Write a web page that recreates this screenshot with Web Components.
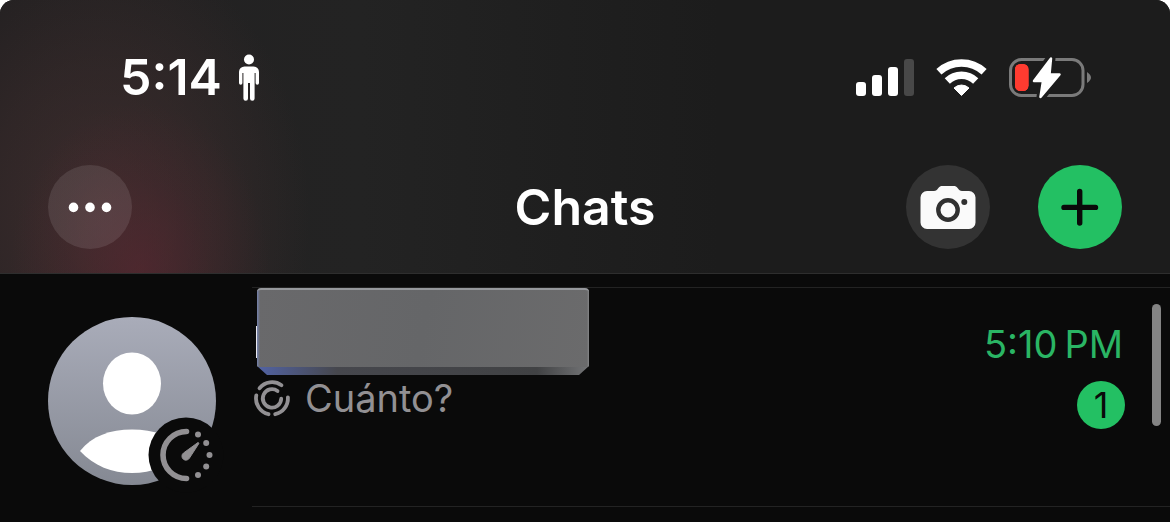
<!DOCTYPE html>
<html lang="es">
<head>
<meta charset="utf-8">
<meta name="viewport" content="width=device-width, initial-scale=1">
<title>Chats</title>
<style>
    body {
        margin: 0;
        background-color: #fff;
        font-family: Inter, "Liberation Sans", sans-serif;
        color: #fff;
    }
</style>
</head>
<body>
<chat-app>
    <status-bar slot="header">5:14</status-bar>
    <nav-bar slot="header">Chats</nav-bar>
    <chat-row time="5:10&#8239;PM" unread="1">Cuánto?</chat-row>
</chat-app>

<script>
const icons = {
    person: `<svg width="24" height="48" viewBox="0 0 24 48" fill="#fff">
        <circle cx="12" cy="6.500" r="5"/>
        <path d="M7.500 13.500h9a5.500 5.500 0 0 1 5.500 5.500V30a1.700 1.700 0 0 1-3.400 0V20h-1v25.500a2.200 2.200 0 0 1-4.600 0V30h-2v15.500a2.200 2.200 0 0 1-4.600 0V20H5.400V30A1.700 1.700 0 0 1 2 30V19A5.500 5.500 0 0 1 7.500 13.500z"/>
    </svg>`,
    signal: `<svg width="58" height="38" viewBox="0 0 58 38" fill="#fff">
        <rect x="0" y="24" width="10" height="14" rx="3"/>
        <rect x="16" y="17" width="10" height="21" rx="3"/>
        <rect x="32" y="9" width="10" height="29" rx="3"/>
        <rect x="48" y="1" width="10" height="37" rx="3" fill="#484848"/>
    </svg>`,
    wifi: `<svg width="51" height="40" viewBox="0 0 51 40" fill="none" stroke="#fff">
        <path stroke-width="7.500" d="M2.900 14.700A33.500 33.500 0 0 1 48.100 14.700"/>
        <path stroke-width="7.500" d="M11.300 24A20.500 20.500 0 0 1 39.700 24"/>
        <path fill="#fff" stroke-linejoin="round" d="M25.500 38.500L18 31A11 11 0 0 1 33 31z"/>
    </svg>`,
    battery: `<svg width="82" height="46" viewBox="0 0 82 46">
        <rect x="1.500" y="5.500" width="72.500" height="36" rx="11" fill="none" stroke="#7a7a7a" stroke-width="3"/>
        <path d="M78 18q8 5.500 0 11z" fill="#7a7a7a"/>
        <rect x="6" y="10" width="13.500" height="27" rx="5.500" fill="#ff3b30"/>
        <path d="M42 4L25 27H34L32 43L50.500 20H40.500z" fill="#1c1c1c" stroke="#1c1c1c" stroke-width="9" stroke-linejoin="round"/>
        <rect x="6" y="10" width="13.500" height="27" rx="5.500" fill="#ff3b30"/>
        <path d="M42 4.500L25 27H34L31.500 43L50.500 20.500H40.500z" fill="#fff" stroke="#fff" stroke-width="2.500" stroke-linejoin="round"/>
    </svg>`,
    more: `<svg width="44" height="12" viewBox="0 0 44 12" fill="#fff">
        <circle cx="5.500" cy="6.400" r="4.800"/><circle cx="22" cy="6.400" r="4.800"/><circle cx="38.500" cy="6.400" r="4.800"/>
    </svg>`,
    camera: `<svg width="56" height="44" viewBox="0 0 56 44">
        <path fill="#fafafa" d="M7 6H14c2 0 3-1 4-2.500C19.500 1.500 20.500 1 22.500 1H33.500c2 0 3 .5 4.500 2.500C39 5 40 6 42 6H49a6.500 6.500 0 0 1 6.500 6.500V37.500A6.500 6.500 0 0 1 49 44H7A6.500 6.500 0 0 1 .5 37.500V12.500A6.500 6.500 0 0 1 7 6z"/>
        <circle cx="28" cy="25" r="9.700" fill="none" stroke="#303030" stroke-width="4.400"/>
        <circle cx="44.300" cy="17" r="3" fill="#303030"/>
    </svg>`,
    plus: `<svg width="40" height="40" viewBox="0 0 40 40" stroke="#0a0a0a" stroke-width="5.400" stroke-linecap="round">
        <path d="M4 20.400H35.500M19.700 4.500V36"/>
    </svg>`,
    avatar: `<svg width="168" height="168" viewBox="0 0 168 168" overflow="visible">
        <defs>
            <linearGradient id="shade" x1="0" y1="0" x2="0" y2="1">
                <stop offset="0" stop-color="#a9acb9"/>
                <stop offset="1" stop-color="#858993"/>
            </linearGradient>
        </defs>
        <circle cx="84" cy="84" r="84" fill="url(#shade)"/>
        <ellipse cx="84" cy="66.500" rx="29" ry="31" fill="#fff"/>
        <path fill="#fff" d="M32 134C44 119 62 112.500 84 112.500S124 119 136 134C122 149 104 156 84 156S46 149 32 134z"/>
        <circle cx="138" cy="138" r="37.500" fill="#0a0a0a"/>
        <path d="M138.500 114.500a23.500 23.500 0 0 0 0 47" fill="none" stroke="#929093" stroke-width="5.600" stroke-linecap="round"/>
        <path d="M135.500 136L150 125.500l1 .8L141.500 141a4 4 0 1 1-6-5z" fill="#929093" stroke="#929093" stroke-linejoin="round"/>
        <g fill="#929093">
            <circle cx="150" cy="117.500" r="3"/><circle cx="158.200" cy="126" r="3"/>
            <circle cx="161.500" cy="138" r="3"/><circle cx="158.200" cy="149.500" r="3"/>
            <circle cx="150" cy="158" r="3"/>
        </g>
    </svg>`,
    ring: `<svg width="38" height="38" viewBox="0 0 38 38" fill="none" stroke="#929093" stroke-width="3.800" stroke-linecap="round">
        <path d="M6.500 9.200A16.200 16.200 0 0 1 28.500 6.200"/>
        <path d="M3.300 16.400A16.200 16.200 0 0 0 15.500 35.200"/>
        <path d="M34.900 18.400A16.200 16.200 0 0 1 22.200 35.200"/>
        <path d="M24.500 12A9.200 9.200 0 1 0 28.200 19.700"/>
    </svg>`
};

class ChatApp extends HTMLElement {
    constructor() {
        super();
        this.attachShadow({ mode: 'open' }).innerHTML = `
<style>
    :host {
        display: flex;
        flex-direction: column;
        min-height: 100vh;
        position: relative;
        overflow: hidden;
        border-radius: 14px 14px 0 0;
        background-color: #0a0a0a;
    }
    header {
        padding: 47px 0 24px;
        border-bottom: 1px solid #2e2e2e;
        background:
            radial-gradient(ellipse 130px 170px at 140px 100%, rgba(96, 38, 50, 0.550), rgba(96, 38, 50, 0.200) 55%, rgba(96, 38, 50, 0)),
            radial-gradient(ellipse 210px 280px at 100px 80%, rgba(78, 52, 52, 0.600), rgba(78, 52, 52, 0.300) 55%, rgba(78, 52, 52, 0)),
            linear-gradient(90deg, #222021, #232323 360px, #1c1c1c 720px);
    }
    main {
        flex: 1;
        padding-top: 13px;
    }
    .thumb {
        position: absolute;
        top: 304px;
        right: 9px;
        width: 9px;
        height: 122px;
        border-radius: 5px;
        background-color: #848484;
    }
</style>
<header><slot name="header"></slot></header>
<main><slot></slot></main>
<div class="thumb"></div>
`;
    }
}

class StatusBar extends HTMLElement {
    constructor() {
        super();
        this.attachShadow({ mode: 'open' }).innerHTML = `
<style>
    :host {
        display: flex;
        align-items: center;
        justify-content: space-between;
        height: 60px;
        padding: 0 79px 0 120px;
        font-size: 50px;
        font-weight: 600;
        line-height: 60px;
    }
    div {
        display: flex;
        align-items: center;
    }
    .left {
        gap: 15px;
    }
    .right {
        gap: 22px;
    }
    svg {
        display: block;
    }
</style>
<div class="left"><span><slot></slot></span>${icons.person}</div>
<div class="right">${icons.signal}${icons.wifi}${icons.battery}</div>
`;
    }
}

class NavBar extends HTMLElement {
    constructor() {
        super();
        this.attachShadow({ mode: 'open' }).innerHTML = `
<style>
    :host {
        display: grid;
        grid-template-columns: 1fr auto 1fr;
        align-items: center;
        margin-top: 58px;
        padding: 0 48px;
    }
    h1 {
        margin: 0;
        font-size: 50px;
        font-weight: 600;
        line-height: 60px;
    }
    .actions {
        display: flex;
        justify-content: flex-end;
        gap: 48px;
    }
    button {
        display: flex;
        align-items: center;
        justify-content: center;
        width: 84px;
        height: 84px;
        padding: 0;
        border: 0;
        border-radius: 50%;
        background-color: rgba(255, 255, 255, 0.100);
    }
    .new {
        background-color: #23c063;
    }
</style>
<button aria-label="More">${icons.more}</button>
<h1><slot></slot></h1>
<div class="actions">
    <button aria-label="Camera">${icons.camera}</button>
    <button class="new" aria-label="New chat">${icons.plus}</button>
</div>
`;
    }
}

class ChatRow extends HTMLElement {
    constructor() {
        super();
        this.attachShadow({ mode: 'open' }).innerHTML = `
<style>
    :host {
        display: flex;
        gap: 36px;
        padding-left: 48px;
        font-size: 38px;
        line-height: 46px;
    }
    .avatar {
        padding-top: 30px;
    }
    svg {
        display: block;
    }
    .content {
        flex: 1;
        display: flex;
        justify-content: space-between;
        min-height: 218px;
        padding-right: 45px;
        border-top: 1px solid #232323;
        border-bottom: 1px solid #232323;
    }
    .name {
        display: flex;
        align-items: center;
        padding-left: 4px;
    }
    .name::before {
        content: "";
        width: 1px;
        height: 32px;
        margin-top: 20px;
        background-color: #e8e8f0;
    }
    .cover {
        box-sizing: border-box;
        width: 332px;
        height: 87px;
        border-top: 2px solid #96989c;
        border-radius: 4px 4px 0 0;
        clip-path: polygon(0 0, 100% 0, 100% 78px, 322px 100%, 10px 100%, 0 78px);
        background:
            linear-gradient(90deg, #7582ad, rgba(117, 130, 173, 0) 3px) top / 100% 77px no-repeat,
            linear-gradient(270deg, #858688, rgba(133, 134, 136, 0) 2px) top / 100% 77px no-repeat,
            linear-gradient(100deg, #69696b, #656668 50%, #6b6b6c) top / 100% 77px no-repeat,
            linear-gradient(90deg, #5263a4, #46474d 80px, #414244 280px, #737476) bottom / 100% 8px no-repeat;
    }
    .message {
        display: flex;
        align-items: center;
        gap: 14px;
        padding-left: 1px;
        color: #929093;
    }
    .meta {
        display: flex;
        flex-direction: column;
        align-items: flex-end;
        gap: 14px;
        padding-top: 33px;
    }
    time {
        padding-right: 2px;
        color: #2ab564;
    }
    .unread {
        min-width: 48px;
        height: 48px;
        border-radius: 24px;
        background-color: #23c063;
        color: #0a0a0a;
        font-size: 36px;
        line-height: 48px;
        text-align: center;
    }
</style>
<div class="avatar">${icons.avatar}</div>
<div class="content">
    <div>
        <div class="name"><div class="cover"></div></div>
        <div class="message">${icons.ring}<span><slot></slot></span></div>
    </div>
    <div class="meta">
        <time></time>
        <div class="unread"></div>
    </div>
</div>
`;
        this.$time = this.shadowRoot.querySelector('time');
        this.$unread = this.shadowRoot.querySelector('.unread');
    }

    connectedCallback() {
        this.$time.textContent = this.getAttribute('time');
        this.$unread.textContent = this.getAttribute('unread');
    }
}

customElements.define('chat-app', ChatApp);
customElements.define('status-bar', StatusBar);
customElements.define('nav-bar', NavBar);
customElements.define('chat-row', ChatRow);
</script>
</body>
</html>
